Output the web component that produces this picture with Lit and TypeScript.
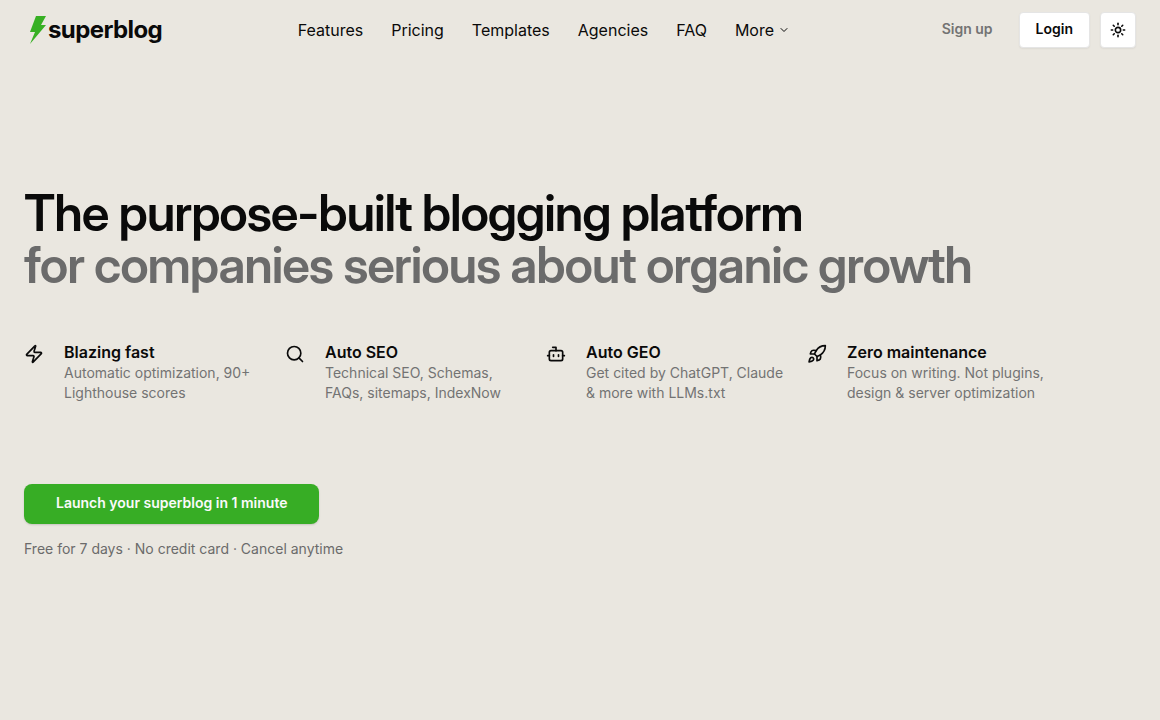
import { LitElement, html, svg, css } from "lit";
import { customElement } from "lit/decorators.js";

const icons = {
  zap: svg`<path d="M4 14a1 1 0 0 1-.78-1.63l9.9-10.2a.5.5 0 0 1 .86.46l-1.92 6.02A1 1 0 0 0 13 10h7a1 1 0 0 1 .78 1.63l-9.9 10.2a.5.5 0 0 1-.86-.46l1.92-6.02A1 1 0 0 0 11 14z"/>`,
  search: svg`<circle cx="11" cy="11" r="8"/><path d="m21 21-4.3-4.3"/>`,
  bot: svg`<path d="M12 8V4H8"/><rect width="16" height="12" x="4" y="8" rx="2"/><path d="M2 14h2"/><path d="M20 14h2"/><path d="M15 13v2"/><path d="M9 13v2"/>`,
  rocket: svg`<path d="M4.5 16.5c-1.5 1.26-2 5-2 5s3.74-.5 5-2c.71-.84.7-2.13-.09-2.91a2.18 2.18 0 0 0-2.91-.09z"/><path d="m12 15-3-3a22 22 0 0 1 2-3.95A12.88 12.88 0 0 1 22 2c0 2.72-.78 7.5-6 11a22.35 22.35 0 0 1-4 2z"/><path d="M9 12H4s.55-3.03 2-4c1.62-1.08 5 0 5 0"/><path d="M12 15v5s3.03-.55 4-2c1.08-1.62 0-5 0-5"/>`,
  sun: svg`<circle cx="12" cy="12" r="4"/><path d="M12 2v2"/><path d="M12 20v2"/><path d="m4.93 4.93 1.41 1.41"/><path d="m17.66 17.66 1.41 1.41"/><path d="M2 12h2"/><path d="M20 12h2"/><path d="m6.34 17.66-1.41 1.41"/><path d="m19.07 4.93-1.41 1.41"/>`,
  chevron: svg`<path d="m6 9 6 6 6-6"/>`,
};

const icon = (name: keyof typeof icons, size: number) => html`
  <svg class="icon" width=${size} height=${size} viewBox="0 0 24 24" aria-hidden="true">${icons[name]}</svg>
`;

const features: { icon: keyof typeof icons; title: string; text: string }[] = [
  { icon: "zap", title: "Blazing fast", text: "Automatic optimization, 90+ Lighthouse scores" },
  { icon: "search", title: "Auto SEO", text: "Technical SEO, Schemas, FAQs, sitemaps, IndexNow" },
  { icon: "bot", title: "Auto GEO", text: "Get cited by ChatGPT, Claude & more with LLMs.txt" },
  { icon: "rocket", title: "Zero maintenance", text: "Focus on writing. Not plugins, design & server optimization" },
];

@customElement("app-root")
export class AppRoot extends LitElement {
  static styles = css`
    :host {
      display: block;
      min-height: 100vh;
      background: #eae7e0;
      color: #0a0a0a;
      font-family: Inter, "Liberation Sans", sans-serif;
      font-size: 16px;
      line-height: 24px;
    }
    *, *::before { box-sizing: border-box; }
    a { color: inherit; text-decoration: none; }
    button { font: inherit; color: inherit; cursor: pointer; }
    h1, h2, p, ul { margin: 0; padding: 0; }
    ul { list-style: none; }
    .icon {
      display: block;
      flex: none;
      fill: none;
      stroke: currentColor;
      stroke-width: 2;
      stroke-linecap: round;
      stroke-linejoin: round;
    }
    .header {
      display: flex;
      justify-content: space-between;
      align-items: center;
      padding: 12px 24px;
    }
    .logo {
      display: flex;
      align-items: center;
      padding-left: 4px;
      font-size: 24px;
      font-weight: 700;
      letter-spacing: -0.025em;
    }
    .nav { display: flex; align-items: center; gap: 28px; }
    .more {
      display: flex;
      align-items: center;
      gap: 4px;
      padding: 0;
      border: 0;
      background: none;
    }
    .actions {
      display: flex;
      align-items: center;
      gap: 10px;
      font-size: 14px;
      font-weight: 600;
      line-height: 20px;
    }
    .signup { padding: 0 16px 2px; color: #737373; }
    .actions .box {
      display: flex;
      align-items: center;
      justify-content: center;
      height: 36px;
      padding: 0 16px;
      border: 1px solid #e5e5e5;
      border-radius: 4px;
      background: #fff;
      box-shadow: 0 1px 2px rgb(0 0 0 / 0.06);
    }
    .actions .login { padding-bottom: 2px; }
    .actions .theme { width: 36px; padding: 0; }
    .actions .theme .icon { stroke-width: 2.4; }
    .hero { padding: 127px 24px 64px; }
    .title {
      font-family: "Inter Display", Inter, "Liberation Sans", sans-serif;
      font-size: 50px;
      font-weight: 600;
      line-height: 52px;
      letter-spacing: -0.0225em;
    }
    .muted { display: block; color: #6b6b6b; }
    .features {
      display: grid;
      grid-template-columns: repeat(auto-fit, minmax(220px, 1fr));
      gap: 20px;
      max-width: 1024px;
      margin-top: 49px;
    }
    .feature { display: flex; gap: 20px; }
    .feature .icon { margin-top: 4px; }
    .name { font-size: 16px; font-weight: 600; line-height: 24px; }
    .text { margin-top: -1px; color: #737373; font-size: 14px; line-height: 20px; }
    .launch {
      display: flex;
      width: fit-content;
      height: 40px;
      align-items: center;
      margin-top: 81px;
      padding: 0 32px 2px;
      border-radius: 8px;
      background: #37ad25;
      box-shadow: 0 1px 2px rgb(0 0 0 / 0.15);
      color: #fafafa;
      font-size: 14px;
      font-weight: 600;
    }
    .note { margin-top: 15px; color: #6b6b6b; font-size: 14px; line-height: 20px; }
  `;

  render() {
    return html`
      <header class="header">
        <a class="logo" href="#">
          <svg width="20" height="30" viewBox="0 0 20 30" aria-hidden="true">
            <path fill="#37b024" d="M8 1h10l-5 9h5L2 29l5-12H2z" />
          </svg>
          superblog
        </a>
        <nav class="nav">
          <a href="#">Features</a>
          <a href="#">Pricing</a>
          <a href="#">Templates</a>
          <a href="#">Agencies</a>
          <a href="#">FAQ</a>
          <button class="more" type="button">More ${icon("chevron", 12)}</button>
        </nav>
        <div class="actions">
          <a class="signup" href="#">Sign up</a>
          <a class="box login" href="#">Login</a>
          <button class="box theme" type="button" aria-label="Toggle theme">${icon("sun", 16)}</button>
        </div>
      </header>
      <main class="hero">
        <h1 class="title">
          The purpose-built blogging platform
          <span class="muted">for companies serious about organic growth</span>
        </h1>
        <ul class="features">
          ${features.map(
            (f) => html`
              <li class="feature">
                ${icon(f.icon, 20)}
                <div>
                  <h2 class="name">${f.title}</h2>
                  <p class="text">${f.text}</p>
                </div>
              </li>
            `
          )}
        </ul>
        <a class="launch" href="#">Launch your superblog in 1 minute</a>
        <p class="note">Free for 7 days · No credit card · Cancel anytime</p>
      </main>
    `;
  }
}
